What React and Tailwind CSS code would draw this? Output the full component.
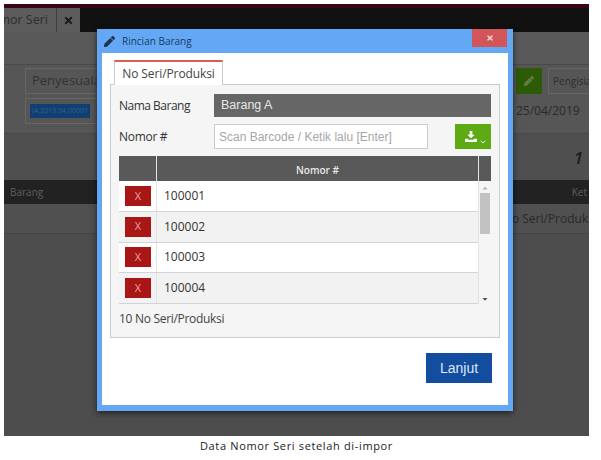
import { FaPen, FaTimes, FaCaretUp, FaCaretDown } from "react-icons/fa";
import { ChevronDown } from "lucide-react";

const font = "font-['Open_Sans',sans-serif]";
const serials = ["100001", "100002", "100003", "100004"];

const Backdrop = () => (
  <div className={`w-[585px] h-[432px] bg-[#4d4d4d] overflow-hidden flex flex-col ${font}`}>
    <div className="h-[4px] bg-[#3a0614]" />
    <div className="h-[24px] bg-[#111111] flex">
      <div className="w-[76px] bg-[#5c5c5c] flex items-center justify-end overflow-hidden">
        <span className="text-[12.5px] text-[#2e2e2e] whitespace-nowrap pr-[8px]">Nomor Seri</span>
        <div className="w-[24px] h-full border-l border-[#3f3f3f] flex items-center justify-center shrink-0">
          <FaTimes className="text-[#1a1a1a] text-[11px]" />
        </div>
      </div>
    </div>
    <div className="h-[33px] bg-[#595959] border-b border-[#4a4a4a]" />
    <div className="h-[69px] bg-[#565656] border-b border-[#484848] pl-[21px] pt-[3px] flex justify-between">
      <div className="flex flex-col gap-[4px]">
        <div className="w-[120px] h-[26px] border border-[#666666] px-[6px] flex items-center text-[13px] text-[#333333] whitespace-nowrap overflow-hidden">
          Penyesuaian
        </div>
        <div className="w-[120px] h-[26px] border border-[#666666] pl-[4px] flex items-center overflow-hidden">
          <span className="bg-[#0f3f73] text-[#34608c] text-[7px] px-[2px] py-[2px] whitespace-nowrap">IA.2019.04.00001</span>
        </div>
      </div>
      <div className="flex flex-col gap-[4px] w-[73px] shrink-0">
        <div className="flex gap-[6px]">
          <div className="w-[26px] h-[26px] bg-[#2d5a05] flex items-center justify-center shrink-0">
            <FaPen className="text-[#5f7d48] text-[10px]" />
          </div>
          <div className="w-[60px] h-[26px] border border-[#666666] pl-[4px] flex items-center text-[10px] text-[#2e2e2e] whitespace-nowrap shrink-0">
            Pengisian
          </div>
        </div>
        <div className="h-[26px] flex items-center text-[12px] text-[#2a2a2a]">25/04/2019</div>
      </div>
    </div>
    <div className="h-[46px] bg-[#4f4f4f] flex justify-end items-center pr-[6px] pt-[2px]">
      <span className="text-[17px] italic font-semibold text-[#1c1c1c]">1</span>
    </div>
    <div className="h-[24px] bg-[#222222] flex items-center justify-between text-[10px] text-[#5e5e5e] whitespace-nowrap overflow-hidden">
      <span className="pl-[6px]">Barang</span>
      <span className="pr-[2px]">Ket</span>
    </div>
    <div className="h-[30px] bg-[#505050] border-b border-[#434343] flex items-center justify-end text-[12px] text-[#2a2a2a] whitespace-nowrap overflow-hidden">
      <span className="-mr-[8px]">No Seri/Produksi</span>
    </div>
  </div>
);

const SerialTable = () => (
  <div className="mx-[8px] mt-[7px] h-[148px] shrink-0 flex flex-col">
    <div className="h-[25px] bg-[#595959] flex text-[10px] font-semibold text-[#e8e8e8]">
      <div className="w-[38px] border-r border-[#e4e4e4]" />
      <div className="flex-1 flex items-center justify-center pt-[3px]">Nomor #</div>
      <div className="w-[13px] border-l border-[#e4e4e4]" />
    </div>
    <div className="flex-1 flex">
      <div className="flex-1 flex flex-col">
        {serials.map((serial, i) => (
          <div
            key={serial}
            className={`h-[30.75px] flex border-b border-[#d4d4d4] ${i % 2 === 0 ? "bg-white" : "bg-[#f2f2f2]"}`}
          >
            <div className="w-[38px] border-r border-[#e2e2e2] pl-[6px] flex items-center">
              <div className="w-[26px] h-[20px] bg-[#a81616] text-[#e9a5a5] text-[11px] flex items-center justify-center">
                X
              </div>
            </div>
            <div className="pl-[7px] flex items-center text-[12px] text-[#333333]">{serial}</div>
          </div>
        ))}
      </div>
      <div className="w-[13px] bg-[#f5f5f5] border-l border-[#e2e2e2] flex flex-col items-center pt-[3px]">
        <FaCaretUp className="text-[#b5b5b5] text-[8px]" />
        <div className="w-[10px] h-[41px] bg-[#c2c2c2] mt-[1px]" />
        <FaCaretDown className="text-[#555555] text-[8px] mt-auto mb-[1px]" />
      </div>
    </div>
  </div>
);

const ItemModal = () => (
  <div className={`absolute left-[97px] top-[29px] w-[416px] h-[382px] bg-[#64a8f5] flex flex-col px-[5px] pb-[6px] shadow-[0_2px_6px_rgba(0,0,0,0.6)] ${font}`}>
    <div className="h-[24px] shrink-0 flex items-center pl-[2px] relative">
      <FaPen className="text-[#1d3553] text-[11px]" />
      <span className="ml-[7px] text-[10px] text-[#1b3a5e]">Rincian Barang</span>
      <div className="absolute right-[1px] top-0 w-[35px] h-[18px] bg-[#d2555a] flex items-center justify-center">
        <FaTimes className="text-[#f4dada] text-[8px]" />
      </div>
    </div>
    <div className="flex-1 bg-white pt-[7px] px-[8px]">
      <div className="w-[109px] h-[25px] ml-[4px] border-x border-[#cccccc] border-t-2 border-t-[#d9604f] bg-white relative -mb-px z-10 flex items-center justify-center text-[12px] tracking-[-0.1px] text-[#444444]">
        No Seri/Produksi
      </div>
      <div className="w-[390px] h-[254px] bg-[#f5f5f5] border border-[#cccccc] flex flex-col">
        <div className="mt-[9px] mx-[8px] flex items-center">
          <span className="w-[95px] text-[12px] tracking-[-0.5px] text-[#333333]">Nama Barang</span>
          <div className="w-[277px] h-[23px] bg-[#666666] pl-[7px] flex items-center text-[12.5px] text-[#e6e6e6] font-['Liberation_Sans',sans-serif]">
            Barang A
          </div>
        </div>
        <div className="mt-[7px] mx-[8px] flex items-center">
          <span className="w-[95px] text-[12px] tracking-[-0.3px] text-[#333333]">Nomor #</span>
          <div className="w-[214px] h-[25px] bg-white border border-[#cccccc] pl-[4px] flex items-center text-[12px] text-[#a6a6a6] whitespace-nowrap overflow-hidden font-['Liberation_Sans',sans-serif]">
            Scan Barcode / Ketik lalu [Enter]
          </div>
          <div className="ml-[27px] w-[36px] h-[25px] bg-[#5cab14] flex items-center justify-center text-white relative">
            <svg width="12" height="11" viewBox="0 0 13 12" className="mr-[4px]" fill="currentColor">
              <path d="M5 0h3v4h2.5l-4 4-4-4H5z" />
              <path d="M0 8.5h3l1 1h5l1-1h3V12H0z" />
            </svg>
            <ChevronDown size={8} strokeWidth={3} className="absolute right-[4px] bottom-[3px]" />
          </div>
        </div>
        <SerialTable />
        <div className="mx-[8px] flex-1 flex items-center pb-[3px] text-[12px] tracking-[-0.3px] text-[#444444]">10 No Seri/Produksi</div>
      </div>
      <div className="flex justify-end mt-[15px] mr-[8px]">
        <div className="w-[66px] h-[30px] bg-[#134da0] flex items-center justify-center text-[14px] font-medium text-[#dfe8f5] font-['Liberation_Sans',sans-serif]">
          Lanjut
        </div>
      </div>
    </div>
  </div>
);

export default function App() {
  return (
    <div className="relative w-[601px] h-[460px] bg-white overflow-hidden pt-[4px] pl-[4px]">
      <Backdrop />
      <ItemModal />
      <div className="w-[585px] pt-[2px] text-center text-[11px] tracking-[0.65px] text-[#222222] font-['Open_Sans',sans-serif]">
        Data Nomor Seri setelah di-impor
      </div>
    </div>
  );
}
